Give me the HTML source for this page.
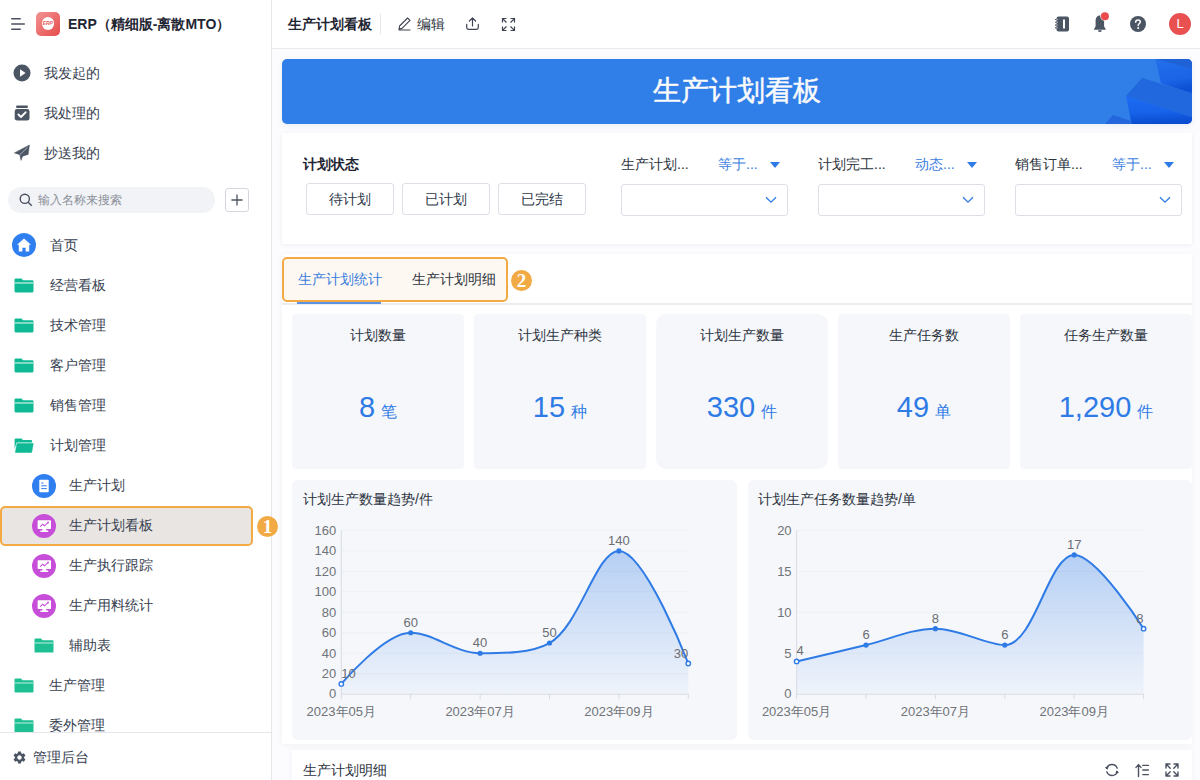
<!DOCTYPE html>
<html><head><meta charset="utf-8">
<style>
*{box-sizing:border-box;margin:0;padding:0}
html,body{width:1200px;height:780px;overflow:hidden}
body{font-family:"Liberation Sans",sans-serif;background:#fcfcfe;position:relative;color:#333}
.a{position:absolute}
.t{position:absolute;white-space:nowrap;line-height:1}
#side{left:0;top:0;width:272px;height:780px;background:#fff;border-right:1px solid #e6e7eb}
.mi{font-size:14px;color:#374151}
#hdr{left:272px;top:0;width:928px;height:49px;background:#fff;border-bottom:1px solid #e8e9ec}
.card{background:#fff;border-radius:0}
.btn{position:absolute;height:32px;width:88px;border:1px solid #dcdfe6;border-radius:3px;background:#fff;font-size:14px;color:#2d3748;text-align:center;line-height:30px}
.sel{position:absolute;height:32px;width:167px;border:1px solid #dcdfe6;border-radius:3px;background:#fff}
.stat{position:absolute;top:314px;width:172px;height:155px;background:#f5f7fb;border-radius:4px;text-align:center}
.stat .tt{position:absolute;left:0;right:0;top:11px;font-size:14px;color:#2d3440;line-height:20px}
.stat .num{position:absolute;left:0;right:0;top:73px;font-size:29px;color:#2f7be6;line-height:40px}
.stat .num small{font-size:16px;margin-left:6px}
.chart{position:absolute;top:480px;height:260px;background:#f5f7fb;border-radius:6px}
svg text.ax{font-size:13px;fill:#707378;font-family:"Liberation Sans",sans-serif}
svg text.lb{font-size:13px;fill:#6b6e73;font-family:"Liberation Sans",sans-serif}
</style></head><body>

<!-- SIDEBAR -->
<div id="side" class="a">
  <svg class="a" style="left:10px;top:17px" width="16" height="14" viewBox="0 0 16 14">
    <rect x="1" y="1" width="10" height="1.6" rx=".8" fill="#4b5160"/>
    <rect x="1" y="6.2" width="14" height="1.6" rx=".8" fill="#4b5160"/>
    <rect x="1" y="11.4" width="10" height="1.6" rx=".8" fill="#4b5160"/>
  </svg>
  <div class="a" style="left:36px;top:12px;width:24px;height:24px;border-radius:5px;background:linear-gradient(135deg,#f39494,#e64b4b)">
    <div class="a" style="left:5.6px;top:5.3px;width:12.4px;height:12.4px;border-radius:50%;background:#fff;color:#e86060;font-size:5px;font-weight:bold;font-style:italic;line-height:12.4px;text-align:center">ERP</div>
  </div>
  <div class="t" style="left:68px;top:17px;font-size:14px;font-weight:bold;color:#1f2633">ERP（精细版-离散MTO）</div>

  <svg class="a" style="left:13px;top:64px" width="18" height="18" viewBox="0 0 18 18"><circle cx="9" cy="9" r="8.5" fill="#4b5563"/><path d="M7 5.3 L12.6 9 L7 12.7 Z" fill="#fff"/></svg>
  <div class="t mi" style="left:44px;top:66px">我发起的</div>
  <svg class="a" style="left:14px;top:105px" width="16" height="16" viewBox="0 0 16 16"><rect x="2" y="0.6" width="12" height="2.4" rx="1.2" fill="#4b5563"/><rect x="0.7" y="4" width="14.8" height="11.6" rx="2.4" fill="#4b5563"/><path d="M4.4 9.5 L7 12 L11.6 7.3" stroke="#fff" stroke-width="1.9" fill="none" stroke-linecap="round" stroke-linejoin="round"/></svg>
  <div class="t mi" style="left:44px;top:106px">我处理的</div>
  <svg class="a" style="left:13px;top:144px" width="18" height="18" viewBox="0 0 18 18"><path d="M16.4 1 L1.4 8.9 L6.8 10.7 L8 16.4 L9.6 12.2 L15.2 10.4 Z" fill="#4b5563" stroke="#4b5563" stroke-width=".5" stroke-linejoin="round"/><path d="M7 10.6 L14.6 3.2" stroke="#fff" stroke-width=".7" opacity=".8"/></svg>
  <div class="t mi" style="left:44px;top:146px">抄送我的</div>

  <div class="a" style="left:8px;top:187px;width:207px;height:26px;border-radius:13px;background:#f2f3f6"></div>
  <svg class="a" style="left:19px;top:193px" width="14" height="14" viewBox="0 0 14 14"><circle cx="5.8" cy="5.8" r="4.6" stroke="#4b5160" stroke-width="1.4" fill="none"/><path d="M9.2 9.2 L12.8 12.8" stroke="#4b5160" stroke-width="1.4"/></svg>
  <div class="t" style="left:38px;top:194px;font-size:12px;color:#8a8f99">输入名称来搜索</div>
  <div class="a" style="left:225px;top:188px;width:24px;height:24px;border:1px solid #d3d6dc;border-radius:3px"></div>
  <svg class="a" style="left:230px;top:193px" width="14" height="14" viewBox="0 0 14 14"><path d="M7 1.5 V12.5 M1.5 7 H12.5" stroke="#4b5160" stroke-width="1.3"/></svg>

  <!-- nav -->
  <svg class="a" style="left:12px;top:233px" width="24" height="24" viewBox="0 0 24 24"><circle cx="12" cy="12" r="12" fill="#2f7ff0"/><path d="M12 5.6 L19 11.8 H17.2 V18.6 H13.6 V14.8 H10.4 V18.6 H6.8 V11.8 H5 Z" fill="#fff"/></svg>
  <div class="t mi" style="left:50px;top:238px">首页</div>
<svg class="a" style="left:14px;top:278px" width="20" height="15" viewBox="0 0 20 15"><path d="M0.5 1.8 Q0.5 0.5 1.8 0.5 H7.4 L9.1 2.2 H18.2 Q19.5 2.2 19.5 3.5 V13 Q19.5 14.5 18 14.5 H2 Q0.5 14.5 0.5 13 Z" fill="#10b996"/><rect x="0.5" y="4.3" width="19" height="1.4" fill="#b2e8da"/></svg>
<div class="t mi" style="left:50px;top:278px">经营看板</div>
<svg class="a" style="left:14px;top:318px" width="20" height="15" viewBox="0 0 20 15"><path d="M0.5 1.8 Q0.5 0.5 1.8 0.5 H7.4 L9.1 2.2 H18.2 Q19.5 2.2 19.5 3.5 V13 Q19.5 14.5 18 14.5 H2 Q0.5 14.5 0.5 13 Z" fill="#10b996"/><rect x="0.5" y="4.3" width="19" height="1.4" fill="#b2e8da"/></svg>
<div class="t mi" style="left:50px;top:318px">技术管理</div>
<svg class="a" style="left:14px;top:358px" width="20" height="15" viewBox="0 0 20 15"><path d="M0.5 1.8 Q0.5 0.5 1.8 0.5 H7.4 L9.1 2.2 H18.2 Q19.5 2.2 19.5 3.5 V13 Q19.5 14.5 18 14.5 H2 Q0.5 14.5 0.5 13 Z" fill="#10b996"/><rect x="0.5" y="4.3" width="19" height="1.4" fill="#b2e8da"/></svg>
<div class="t mi" style="left:50px;top:358px">客户管理</div>
<svg class="a" style="left:14px;top:398px" width="20" height="15" viewBox="0 0 20 15"><path d="M0.5 1.8 Q0.5 0.5 1.8 0.5 H7.4 L9.1 2.2 H18.2 Q19.5 2.2 19.5 3.5 V13 Q19.5 14.5 18 14.5 H2 Q0.5 14.5 0.5 13 Z" fill="#10b996"/><rect x="0.5" y="4.3" width="19" height="1.4" fill="#b2e8da"/></svg>
<div class="t mi" style="left:50px;top:398px">销售管理</div>
<svg class="a" style="left:14px;top:438px" width="20" height="15" viewBox="0 0 20 15"><path d="M0.6 1.6 Q0.6 0.4 1.8 0.4 H7.4 L9 2 H17 Q18.1 2 18.1 3.2 V4.6 H3.2 Q2.4 4.6 2.2 5.4 L0.6 11 Z" fill="#10b996"/><path d="M3 5.6 H19.3 L17.6 14.4 H1.4 Z" fill="#10b996" stroke="#10b996" stroke-width=".6" stroke-linejoin="round"/></svg>
<div class="t mi" style="left:50px;top:438px">计划管理</div>
  <div class="a" style="left:0;top:506px;width:253px;height:40px;border:2px solid #f3a944;border-radius:5px;background:#e8e5e2"></div>
  <svg class="a" style="left:32px;top:474px" width="24" height="24" viewBox="0 0 24 24"><circle cx="12" cy="12" r="12" fill="#2f7ff0"/><rect x="7.3" y="5.8" width="9.4" height="12.4" rx="0.8" fill="#fff"/><path d="M9.2 9 H11.5 M9.2 11.8 H14.8 M9.2 14.6 H14.8" stroke="#2f7ff0" stroke-width="1"/></svg>
  <div class="t mi" style="left:69px;top:478px">生产计划</div>
<svg class="a" style="left:32px;top:514px" width="24" height="24" viewBox="0 0 24 24"><circle cx="12" cy="12" r="12" fill="#c64ed9"/><rect x="5.6" y="6.2" width="13.4" height="8.8" rx="0.7" fill="#fff"/><path d="M8.2 12.6 L10.6 10.2 L12.6 11.8 L15.6 8.9" stroke="#c64ed9" stroke-width="1.1" fill="none"/><circle cx="16" cy="8.6" r="1" fill="#c64ed9"/><path d="M10.6 15 H14 L14.4 16.6 H16.2 V18 H8.4 V16.6 H10.2 Z" fill="#fff"/></svg>
<div class="t mi" style="left:69px;top:518px">生产计划看板</div>
<svg class="a" style="left:32px;top:554px" width="24" height="24" viewBox="0 0 24 24"><circle cx="12" cy="12" r="12" fill="#c64ed9"/><rect x="5.6" y="6.2" width="13.4" height="8.8" rx="0.7" fill="#fff"/><path d="M8.2 12.6 L10.6 10.2 L12.6 11.8 L15.6 8.9" stroke="#c64ed9" stroke-width="1.1" fill="none"/><circle cx="16" cy="8.6" r="1" fill="#c64ed9"/><path d="M10.6 15 H14 L14.4 16.6 H16.2 V18 H8.4 V16.6 H10.2 Z" fill="#fff"/></svg>
<div class="t mi" style="left:69px;top:558px">生产执行跟踪</div>
<svg class="a" style="left:32px;top:594px" width="24" height="24" viewBox="0 0 24 24"><circle cx="12" cy="12" r="12" fill="#c64ed9"/><rect x="5.6" y="6.2" width="13.4" height="8.8" rx="0.7" fill="#fff"/><path d="M8.2 12.6 L10.6 10.2 L12.6 11.8 L15.6 8.9" stroke="#c64ed9" stroke-width="1.1" fill="none"/><circle cx="16" cy="8.6" r="1" fill="#c64ed9"/><path d="M10.6 15 H14 L14.4 16.6 H16.2 V18 H8.4 V16.6 H10.2 Z" fill="#fff"/></svg>
<div class="t mi" style="left:69px;top:598px">生产用料统计</div>
  <svg class="a" style="left:34px;top:638px" width="20" height="15" viewBox="0 0 20 15"><path d="M0.5 1.5 Q0.5 0.5 1.5 0.5 H7 L8.6 2.2 H18.5 Q19.5 2.2 19.5 3.2 V13.5 Q19.5 14.5 18.5 14.5 H1.5 Q0.5 14.5 0.5 13.5 Z" fill="#1fbf94"/><rect x="0.5" y="4.4" width="19" height="1.2" fill="#a6e5d2"/></svg>
  <div class="t mi" style="left:69px;top:638px">辅助表</div>
  <svg class="a" style="left:14px;top:678px" width="20" height="15" viewBox="0 0 20 15"><path d="M0.5 1.5 Q0.5 0.5 1.5 0.5 H7 L8.6 2.2 H18.5 Q19.5 2.2 19.5 3.2 V13.5 Q19.5 14.5 18.5 14.5 H1.5 Q0.5 14.5 0.5 13.5 Z" fill="#1fbf94"/><rect x="0.5" y="4.4" width="19" height="1.2" fill="#a6e5d2"/></svg>
  <div class="t mi" style="left:49px;top:678px">生产管理</div>
  <svg class="a" style="left:14px;top:718px" width="20" height="15" viewBox="0 0 20 15"><path d="M0.5 1.5 Q0.5 0.5 1.5 0.5 H7 L8.6 2.2 H18.5 Q19.5 2.2 19.5 3.2 V13.5 Q19.5 14.5 18.5 14.5 H1.5 Q0.5 14.5 0.5 13.5 Z" fill="#1fbf94"/><rect x="0.5" y="4.4" width="19" height="1.2" fill="#a6e5d2"/></svg>
  <div class="t mi" style="left:49px;top:718px">委外管理</div>

  <div class="a" style="left:0;top:732px;width:271px;height:48px;background:#fff;border-top:1px solid #e6e7eb"></div>
  <svg class="a" style="left:12px;top:750px" width="15" height="15" viewBox="0 0 24 24"><path fill="#4b5563" d="M19.14 12.94c.04-.3.06-.61.06-.94s-.02-.64-.07-.94l2.03-1.58a.49.49 0 0 0 .12-.61l-1.92-3.32a.488.488 0 0 0-.59-.22l-2.39.96c-.5-.38-1.03-.7-1.62-.94l-.36-2.54a.484.484 0 0 0-.48-.41h-3.84c-.24 0-.43.17-.47.41l-.36 2.54c-.59.24-1.13.57-1.62.94l-2.39-.96a.49.49 0 0 0-.59.22L2.74 8.87c-.12.21-.08.47.12.61l2.03 1.58c-.05.3-.09.63-.09.94s.02.64.07.94l-2.03 1.58a.49.49 0 0 0-.12.61l1.92 3.32c.12.22.37.29.59.22l2.39-.96c.5.38 1.03.7 1.62.94l.36 2.54c.05.24.24.41.48.41h3.84c.24 0 .44-.17.47-.41l.36-2.54c.59-.24 1.13-.56 1.62-.94l2.39.96c.22.08.47 0 .59-.22l1.92-3.32c.12-.22.07-.47-.12-.61l-2.01-1.58zM12 15.6c-1.98 0-3.6-1.62-3.6-3.6s1.62-3.6 3.6-3.6 3.6 1.62 3.6 3.6-1.62 3.6-3.6 3.6z"/></svg>
  <div class="t mi" style="left:33px;top:750px">管理后台</div>
</div>
<!-- badge 1 -->
<div class="a" style="left:257px;top:516px;width:21px;height:21px;border-radius:50%;background:#f2aa45;color:#fff;font-family:'Liberation Serif',serif;font-weight:bold;font-size:19px;line-height:22px;text-align:center">1</div>

<!-- HEADER -->
<div id="hdr" class="a">
  <div class="t" style="left:16px;top:17px;font-size:14px;font-weight:bold;color:#1f2633">生产计划看板</div>
  <div class="a" style="left:108px;top:14px;width:1px;height:20px;background:#e5e6ea"></div>
  <svg class="a" style="left:125px;top:16px" width="15" height="15" viewBox="0 0 15 15"><path d="M2 13 L2.6 10 L10.6 2 L13 4.4 L5 12.4 Z M1.5 14 H13.5" stroke="#3d4350" stroke-width="1.1" fill="none" stroke-linejoin="round"/></svg>
  <div class="t" style="left:145px;top:17px;font-size:14px;color:#2d3440">编辑</div>
  <svg class="a" style="left:193px;top:16px" width="15" height="15" viewBox="0 0 15 15"><path d="M7.5 10 V2 M4.4 5 L7.5 1.9 L10.6 5 M1.7 8.3 V11.6 Q1.7 13.3 3.4 13.3 H11.6 Q13.3 13.3 13.3 11.6 V8.3" stroke="#3d4350" stroke-width="1.2" fill="none" stroke-linejoin="round" stroke-linecap="round"/></svg>
  <svg class="a" style="left:229px;top:17px" width="15" height="15" viewBox="0 0 15 15"><path d="M1.5 5.5 V1.5 H5.5 M9.5 1.5 H13.5 V5.5 M13.5 9.5 V13.5 H9.5 M5.5 13.5 H1.5 V9.5 M1.8 1.8 L5.5 5.5 M13.2 1.8 L9.5 5.5 M13.2 13.2 L9.5 9.5 M1.8 13.2 L5.5 9.5" stroke="#3d4350" stroke-width="1.2" fill="none"/></svg>

  <svg class="a" style="left:782px;top:16px" width="16" height="16" viewBox="0 0 16 16"><rect x="2.5" y="0.5" width="12.5" height="15" rx="2" fill="#4b5563"/><rect x="9" y="3.5" width="2" height="9" fill="#fff"/><path d="M1 3.5 H4 M1 6.3 H4 M1 9.1 H4 M1 11.9 H4" stroke="#4b5563" stroke-width="1.1"/><path d="M2.5 3.5 H4 M2.5 6.3 H4 M2.5 9.1 H4 M2.5 11.9 H4" stroke="#fff" stroke-width=".6"/></svg>
  <svg class="a" style="left:819px;top:10px" width="22" height="23" viewBox="0 0 22 23"><path d="M8.85 5.6 C5.9 5.6 4.6 8.3 4.6 11 V16.2 L2.8 19.8 H14.9 L13.1 16.2 V11 C13.1 8.3 11.8 5.6 8.85 5.6 Z" fill="#4b5563"/><path d="M7 20.2 A1.85 1.85 0 0 0 10.7 20.2 Z" fill="#4b5563"/><circle cx="13.9" cy="6.3" r="4.6" fill="#fff"/><circle cx="13.9" cy="6.3" r="4" fill="#ea4b4b"/></svg>
  <svg class="a" style="left:858px;top:16px" width="16" height="16" viewBox="0 0 16 16"><circle cx="8" cy="8" r="8" fill="#4b5563"/><path d="M5.7 6.2 C5.7 4.8 6.7 4 8 4 C9.3 4 10.3 4.8 10.3 6 C10.3 7.4 8.2 7.6 8.2 9.4" stroke="#fff" stroke-width="1.5" fill="none" stroke-linecap="round"/><circle cx="8.2" cy="11.9" r="1" fill="#fff"/></svg>
  <div class="a" style="left:897px;top:13px;width:22px;height:22px;border-radius:50%;background:#e95151;color:#fff;font-size:13px;line-height:22px;text-align:center">L</div>
</div>

<!-- MAIN -->
<div class="a" style="left:282px;top:59px;width:910px;height:65px;border-radius:5px;background:#307fe9;overflow:hidden;box-shadow:0 2px 6px rgba(40,60,120,.08)">
  <svg class="a" style="left:0;top:0" width="910" height="65" viewBox="282 59 910 65">
    <defs>
      <linearGradient id="bA" x1="0" y1="0" x2="0.2" y2="1"><stop offset="0" stop-color="#2470ea"/><stop offset="0.7" stop-color="#1a63e6"/><stop offset="1" stop-color="#0c4fd2"/></linearGradient>
      <linearGradient id="bB" x1="0" y1="0" x2="0.1" y2="1"><stop offset="0" stop-color="#1d6cf0"/><stop offset="0.6" stop-color="#1763ea"/><stop offset="1" stop-color="#0a4ccf"/></linearGradient>
    </defs>
    <polygon points="1155.5,59 1192,59 1192,93.5 1160.8,83" fill="url(#bA)"/>
    <polygon points="1157,59 1192,59 1192,68.5" fill="#1f62d6"/>
    <polygon points="1126,96 1142,78 1192,93 1192,117" fill="#2167dd"/>
    <polygon points="1126,96 1192,117 1192,124 1131.5,124" fill="url(#bB)"/>
    <polygon points="1105,124 1113,115 1131,121 1132,124" fill="#2466dc"/>
  </svg>
  <div class="t" style="left:0;width:910px;text-align:center;top:18px;font-size:28px;color:#fafafa;-webkit-text-stroke:0.5px #fafafa">生产计划看板</div>
</div>

<!-- filter card -->
<div class="a card" style="left:282px;top:133px;width:910px;height:111px;box-shadow:0 1px 4px rgba(60,50,120,.07)"></div>
<div class="t" style="left:303px;top:157px;font-size:14px;font-weight:bold;color:#1f2633">计划状态</div>
<div class="btn" style="left:306px;top:183px">待计划</div>
<div class="btn" style="left:402px;top:183px">已计划</div>
<div class="btn" style="left:498px;top:183px">已完结</div>
<div class="t" style="left:621px;top:157px;font-size:14px;color:#2d3440">生产计划...</div>
<div class="t" style="left:718px;top:157px;font-size:14px;color:#3a7de0">等于...</div>
<svg class="a" style="left:770px;top:162px" width="10" height="6" viewBox="0 0 10 6"><path d="M0 0 H10 L5 6 Z" fill="#2f7be6"/></svg>
<div class="sel" style="left:621px;top:184px"></div>
<svg class="a" style="left:765px;top:196px" width="12" height="8" viewBox="0 0 12 8"><path d="M1 1.2 L6 6.2 L11 1.2" stroke="#2f7be6" stroke-width="1.3" fill="none"/></svg>
<div class="t" style="left:818px;top:157px;font-size:14px;color:#2d3440">计划完工...</div>
<div class="t" style="left:915px;top:157px;font-size:14px;color:#3a7de0">动态...</div>
<svg class="a" style="left:967px;top:162px" width="10" height="6" viewBox="0 0 10 6"><path d="M0 0 H10 L5 6 Z" fill="#2f7be6"/></svg>
<div class="sel" style="left:818px;top:184px"></div>
<svg class="a" style="left:962px;top:196px" width="12" height="8" viewBox="0 0 12 8"><path d="M1 1.2 L6 6.2 L11 1.2" stroke="#2f7be6" stroke-width="1.3" fill="none"/></svg>
<div class="t" style="left:1015px;top:157px;font-size:14px;color:#2d3440">销售订单...</div>
<div class="t" style="left:1112px;top:157px;font-size:14px;color:#3a7de0">等于...</div>
<svg class="a" style="left:1164px;top:162px" width="10" height="6" viewBox="0 0 10 6"><path d="M0 0 H10 L5 6 Z" fill="#2f7be6"/></svg>
<div class="sel" style="left:1015px;top:184px"></div>
<svg class="a" style="left:1159px;top:196px" width="12" height="8" viewBox="0 0 12 8"><path d="M1 1.2 L6 6.2 L11 1.2" stroke="#2f7be6" stroke-width="1.3" fill="none"/></svg>

<!-- tabs panel -->
<div class="a" style="left:282px;top:254px;width:910px;height:490px;background:#fff;box-shadow:0 1px 6px rgba(40,50,90,.05)"></div>
<div class="a" style="left:282px;top:303px;width:910px;height:2px;background:#ebecef"></div>
<div class="a" style="left:282px;top:257px;width:226px;height:45px;border:2px solid #f3a944;border-radius:5px;background:#fdf8f1"></div>
<div class="t" style="left:298px;top:272px;font-size:14px;color:#3a7de0">生产计划统计</div>
<div class="a" style="left:297px;top:302px;width:84px;height:2px;background:#5a93e4"></div>
<div class="t" style="left:412px;top:272px;font-size:14px;color:#2d3440">生产计划明细</div>
<div class="a" style="left:511px;top:270px;width:21px;height:21px;border-radius:50%;background:#f2aa45;color:#fff;font-family:'Liberation Serif',serif;font-weight:bold;font-size:19px;line-height:22px;text-align:center">2</div>

<div class="stat" style="left:292px;border-radius:4px"><div class="tt">计划数量</div><div class="num">8<small>笔</small></div></div>
<div class="stat" style="left:474px;border-radius:4px"><div class="tt">计划生产种类</div><div class="num">15<small>种</small></div></div>
<div class="stat" style="left:656px;border-radius:10px"><div class="tt">计划生产数量</div><div class="num">330<small>件</small></div></div>
<div class="stat" style="left:838px;border-radius:4px"><div class="tt">生产任务数</div><div class="num">49<small>单</small></div></div>
<div class="stat" style="left:1020px;border-radius:4px"><div class="tt">任务生产数量</div><div class="num">1,290<small>件</small></div></div>

<div class="chart" style="left:292px;width:445px"></div>
<div class="chart" style="left:748px;width:444px"></div>
<div class="t" style="left:303px;top:492px;font-size:14px;color:#2d3440">计划生产数量趋势/件</div>
<div class="t" style="left:758px;top:492px;font-size:14px;color:#2d3440">计划生产任务数量趋势/单</div>
<svg class="a" style="left:0;top:0" width="1200" height="780">
<defs><linearGradient id="ga" x1="0" y1="0" x2="0" y2="1"><stop offset="0" stop-color="#2f7be6" stop-opacity=".32"/><stop offset="1" stop-color="#2f7be6" stop-opacity=".03"/></linearGradient></defs>
<text x="336.3" y="698.4" text-anchor="end" class="ax">0</text>
<line x1="341.3" y1="673.7" x2="688.3" y2="673.7" stroke="#eef0f4" stroke-width="1"/>
<text x="336.3" y="677.9" text-anchor="end" class="ax">20</text>
<line x1="341.3" y1="653.2" x2="688.3" y2="653.2" stroke="#eef0f4" stroke-width="1"/>
<text x="336.3" y="657.5" text-anchor="end" class="ax">40</text>
<line x1="341.3" y1="632.8" x2="688.3" y2="632.8" stroke="#eef0f4" stroke-width="1"/>
<text x="336.3" y="637.0" text-anchor="end" class="ax">60</text>
<line x1="341.3" y1="612.3" x2="688.3" y2="612.3" stroke="#eef0f4" stroke-width="1"/>
<text x="336.3" y="616.5" text-anchor="end" class="ax">80</text>
<line x1="341.3" y1="591.8" x2="688.3" y2="591.8" stroke="#eef0f4" stroke-width="1"/>
<text x="336.3" y="596.0" text-anchor="end" class="ax">100</text>
<line x1="341.3" y1="571.4" x2="688.3" y2="571.4" stroke="#eef0f4" stroke-width="1"/>
<text x="336.3" y="575.6" text-anchor="end" class="ax">120</text>
<line x1="341.3" y1="550.9" x2="688.3" y2="550.9" stroke="#eef0f4" stroke-width="1"/>
<text x="336.3" y="555.1" text-anchor="end" class="ax">140</text>
<line x1="341.3" y1="530.4" x2="688.3" y2="530.4" stroke="#eef0f4" stroke-width="1"/>
<text x="336.3" y="534.6" text-anchor="end" class="ax">160</text>
<path d="M341.30,683.96 C341.30,683.96 384.28,632.77 410.70,632.77 C432.86,632.77 455.43,653.25 480.10,653.25 C504.01,653.25 531.13,653.25 549.50,643.01 C579.71,626.18 596.27,550.88 618.90,550.88 C644.85,550.88 688.30,663.49 688.30,663.49 L688.30,694.2 L341.30,694.2 Z" fill="url(#ga)"/>
<line x1="341.3" y1="530.4" x2="341.3" y2="694.2" stroke="#d9dce3" stroke-width="1"/>
<line x1="341.3" y1="694.2" x2="688.8" y2="694.2" stroke="#d9dce3" stroke-width="1"/>
<line x1="341.3" y1="694.2" x2="341.3" y2="699.2" stroke="#d9dce3" stroke-width="1"/>
<line x1="410.7" y1="694.2" x2="410.7" y2="699.2" stroke="#d9dce3" stroke-width="1"/>
<line x1="480.1" y1="694.2" x2="480.1" y2="699.2" stroke="#d9dce3" stroke-width="1"/>
<line x1="549.5" y1="694.2" x2="549.5" y2="699.2" stroke="#d9dce3" stroke-width="1"/>
<line x1="618.9" y1="694.2" x2="618.9" y2="699.2" stroke="#d9dce3" stroke-width="1"/>
<line x1="688.3" y1="694.2" x2="688.3" y2="699.2" stroke="#d9dce3" stroke-width="1"/>
<text x="341.3" y="716.2" text-anchor="middle" class="ax">2023年05月</text>
<text x="480.1" y="716.2" text-anchor="middle" class="ax">2023年07月</text>
<text x="618.9" y="716.2" text-anchor="middle" class="ax">2023年09月</text>
<path d="M341.30,683.96 C341.30,683.96 384.28,632.77 410.70,632.77 C432.86,632.77 455.43,653.25 480.10,653.25 C504.01,653.25 531.13,653.25 549.50,643.01 C579.71,626.18 596.27,550.88 618.90,550.88 C644.85,550.88 688.30,663.49 688.30,663.49" fill="none" stroke="#2f7be6" stroke-width="2"/>
<circle cx="341.30" cy="683.96" r="2.2" fill="#fff" stroke="#2f7be6" stroke-width="1.4"/>
<circle cx="410.70" cy="632.77" r="2.6" fill="#2f7be6"/>
<circle cx="480.10" cy="653.25" r="2.6" fill="#2f7be6"/>
<circle cx="549.50" cy="643.01" r="2.6" fill="#2f7be6"/>
<circle cx="618.90" cy="550.88" r="2.6" fill="#2f7be6"/>
<circle cx="688.30" cy="663.49" r="2.2" fill="#fff" stroke="#2f7be6" stroke-width="1.4"/>
<text x="341.30" y="678.0" text-anchor="start" class="lb">10</text>
<text x="410.70" y="626.8" text-anchor="middle" class="lb">60</text>
<text x="480.10" y="647.2" text-anchor="middle" class="lb">40</text>
<text x="549.50" y="637.0" text-anchor="middle" class="lb">50</text>
<text x="618.90" y="544.9" text-anchor="middle" class="lb">140</text>
<text x="688.30" y="657.5" text-anchor="end" class="lb">30</text>
<text x="791.6" y="698.4" text-anchor="end" class="ax">0</text>
<line x1="796.6" y1="653.2" x2="1143.6" y2="653.2" stroke="#eef0f4" stroke-width="1"/>
<text x="791.6" y="657.5" text-anchor="end" class="ax">5</text>
<line x1="796.6" y1="612.3" x2="1143.6" y2="612.3" stroke="#eef0f4" stroke-width="1"/>
<text x="791.6" y="616.5" text-anchor="end" class="ax">10</text>
<line x1="796.6" y1="571.4" x2="1143.6" y2="571.4" stroke="#eef0f4" stroke-width="1"/>
<text x="791.6" y="575.6" text-anchor="end" class="ax">15</text>
<line x1="796.6" y1="530.4" x2="1143.6" y2="530.4" stroke="#eef0f4" stroke-width="1"/>
<text x="791.6" y="534.6" text-anchor="end" class="ax">20</text>
<path d="M796.60,661.44 C796.60,661.44 841.71,650.79 866.00,645.06 C890.29,639.33 911.11,628.68 935.40,628.68 C959.69,628.68 986.08,645.06 1004.80,645.06 C1034.66,645.06 1048.50,554.97 1074.20,554.97 C1097.08,554.97 1143.60,628.68 1143.60,628.68 L1143.60,694.2 L796.60,694.2 Z" fill="url(#ga)"/>
<line x1="796.6" y1="530.4" x2="796.6" y2="694.2" stroke="#d9dce3" stroke-width="1"/>
<line x1="796.6" y1="694.2" x2="1144.1" y2="694.2" stroke="#d9dce3" stroke-width="1"/>
<line x1="796.6" y1="694.2" x2="796.6" y2="699.2" stroke="#d9dce3" stroke-width="1"/>
<line x1="866.0" y1="694.2" x2="866.0" y2="699.2" stroke="#d9dce3" stroke-width="1"/>
<line x1="935.4" y1="694.2" x2="935.4" y2="699.2" stroke="#d9dce3" stroke-width="1"/>
<line x1="1004.8" y1="694.2" x2="1004.8" y2="699.2" stroke="#d9dce3" stroke-width="1"/>
<line x1="1074.2" y1="694.2" x2="1074.2" y2="699.2" stroke="#d9dce3" stroke-width="1"/>
<line x1="1143.6" y1="694.2" x2="1143.6" y2="699.2" stroke="#d9dce3" stroke-width="1"/>
<text x="796.6" y="716.2" text-anchor="middle" class="ax">2023年05月</text>
<text x="935.4" y="716.2" text-anchor="middle" class="ax">2023年07月</text>
<text x="1074.2" y="716.2" text-anchor="middle" class="ax">2023年09月</text>
<path d="M796.60,661.44 C796.60,661.44 841.71,650.79 866.00,645.06 C890.29,639.33 911.11,628.68 935.40,628.68 C959.69,628.68 986.08,645.06 1004.80,645.06 C1034.66,645.06 1048.50,554.97 1074.20,554.97 C1097.08,554.97 1143.60,628.68 1143.60,628.68" fill="none" stroke="#2f7be6" stroke-width="2"/>
<circle cx="796.60" cy="661.44" r="2.2" fill="#fff" stroke="#2f7be6" stroke-width="1.4"/>
<circle cx="866.00" cy="645.06" r="2.6" fill="#2f7be6"/>
<circle cx="935.40" cy="628.68" r="2.6" fill="#2f7be6"/>
<circle cx="1004.80" cy="645.06" r="2.6" fill="#2f7be6"/>
<circle cx="1074.20" cy="554.97" r="2.6" fill="#2f7be6"/>
<circle cx="1143.60" cy="628.68" r="2.2" fill="#fff" stroke="#2f7be6" stroke-width="1.4"/>
<text x="796.60" y="655.4" text-anchor="start" class="lb">4</text>
<text x="866.00" y="639.1" text-anchor="middle" class="lb">6</text>
<text x="935.40" y="622.7" text-anchor="middle" class="lb">8</text>
<text x="1004.80" y="639.1" text-anchor="middle" class="lb">6</text>
<text x="1074.20" y="549.0" text-anchor="middle" class="lb">17</text>
<text x="1143.60" y="622.7" text-anchor="end" class="lb">8</text>
</svg>

<!-- bottom card -->
<div class="a" style="left:292px;top:750px;width:900px;height:40px;background:#fff;box-shadow:0 -1px 5px rgba(40,50,90,.05)"></div>
<div class="t" style="left:303px;top:763px;font-size:14px;color:#2d3440">生产计划明细</div>
<svg class="a" style="left:1104px;top:762px" width="16" height="16" viewBox="0 0 16 16"><path d="M2.6 6.4 A5.6 5.6 0 0 1 13.2 6.2" stroke="#4b5160" stroke-width="1.4" fill="none" stroke-linecap="round"/><path d="M13.4 9.6 A5.6 5.6 0 0 1 2.8 9.8" stroke="#4b5160" stroke-width="1.4" fill="none" stroke-linecap="round"/><path d="M0.9 5.2 L3.6 7.8 L4.6 4.6 Z" fill="#4b5160"/><path d="M15.1 10.8 L12.4 8.2 L11.4 11.4 Z" fill="#4b5160"/></svg>
<svg class="a" style="left:1134px;top:762px" width="16" height="16" viewBox="0 0 16 16"><path d="M4.5 14.5 V2.8 M2 5.4 L4.5 2.6 L7 5.4 M8.8 3.4 H14.4 M8.8 8 H14.4 M8.8 12.6 H14.4" stroke="#4b5160" stroke-width="1.4" fill="none" stroke-linecap="round" stroke-linejoin="round"/></svg>
<svg class="a" style="left:1164px;top:762px" width="16" height="16" viewBox="0 0 16 16"><path d="M2 6 V2 H6 M2.3 2.3 L6.2 6.2 M10 2 H14 V6 M13.7 2.3 L9.8 6.2 M14 10 V14 H10 M13.7 13.7 L9.8 9.8 M6 14 H2 V10 M2.3 13.7 L6.2 9.8" stroke="#4b5160" stroke-width="1.4" fill="none" stroke-linecap="round" stroke-linejoin="round"/></svg>
</body></html>
